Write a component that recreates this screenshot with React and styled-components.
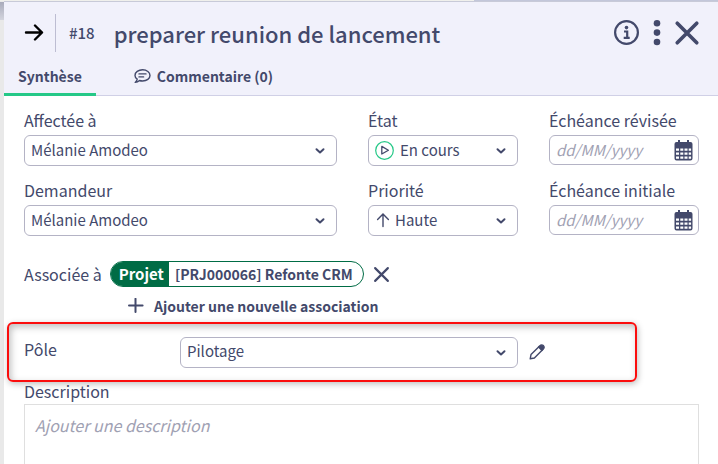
import React from 'react'
import styled, { createGlobalStyle } from 'styled-components'

const INK = '#43496b'
const LINE = '#b4b3c5'
const GREEN = '#25c887'
const FONT = '"Noto Sans CJK SC", "Noto Sans", sans-serif'

const GlobalStyle = createGlobalStyle`
  * { box-sizing:border-box; }
  body {
    margin:0;
    background:#e9e9e9;
    color:${INK};
    font:400 16px/24px ${FONT};
  }
  button, input, select, textarea { font:inherit; color:inherit; }
  button { padding:0; border:0; background:none; cursor:pointer; }
  svg { display:block; flex:none; }
`

const Page = styled.div`
  min-height:100vh;
  display:flex;
  flex-direction:column;
  padding:1px 0 0 4px;
  background:
    linear-gradient(90deg, #f0f0ec 66%, #c3c7da 66%) 0 0 / 100% 1px no-repeat,
    linear-gradient(#a9abbb, #d3d4dd) 0 2px / 4px 18px no-repeat,
    #e9e9e9;
`

const Panel = styled.main`
  flex:1;
  display:flex;
  flex-direction:column;
  background:#fff;
`

const Header = styled.header`
  background:#f1f1fb;
  border-top:1px solid #c8cad8;
  border-bottom:1px solid #d0d0e6;
`

const TitleBar = styled.div`
  display:flex;
  align-items:center;
  height:62px;
  padding:0 18px 0 20px;
`

const Reference = styled.span`
  height:38px;
  margin-left:11px;
  padding-left:13px;
  border-left:1px solid #bdbdd2;
  font-size:15px;
  font-weight:500;
  line-height:38px;
`

const Title = styled.h1`
  flex:1;
  margin:0 0 0 19px;
  font-size:22px;
  font-weight:500;
  line-height:32px;
`

const Actions = styled.div`
  display:flex;
  align-items:center;
  gap:12px;
`

const Tabs = styled.nav`
  display:flex;
  gap:24px;
  margin-bottom:-1px;
`

const Tab = styled.button`
  display:flex;
  align-items:center;
  gap:6px;
  height:32px;
  padding:0 14px 5px;
  border-bottom:3px solid ${p => p.$active ? GREEN : 'transparent'};
  font-size:14px;
  font-weight:700;
`

const Fields = styled.div`
  display:grid;
  grid-template-columns:1fr 150px 150px;
  gap:12px 31px;
  padding:12px 19px 0 20px;
`

const Field = styled.div`
  display:flex;
  flex-direction:column;
  gap:3px;
`

const Label = styled.label`
  font-size:16px;
  line-height:24px;
`

const Control = styled.div`
  display:grid;
  grid-template-columns:auto 1fr auto;
  align-items:center;
  flex:${p => p.$grow ? 1 : 'none'};
`

const Select = styled.select`
  grid-area:1 / 1 / 2 / 4;
  appearance:none;
  width:100%;
  height:31px;
  padding:0 32px 2px ${p => p.$indent || 6}px;
  border:1px solid ${LINE};
  border-radius:6px;
  background:#fff;
  font-size:15px;
  line-height:24px;
`

const Leading = styled.span`
  grid-area:1 / 1;
  padding-left:7px;
  pointer-events:none;
`

const Trailing = styled.span`
  grid-area:1 / 3;
  padding-right:12px;
  pointer-events:none;
`

const DateInput = styled.input`
  grid-area:1 / 1 / 2 / 4;
  width:100%;
  height:30px;
  padding:0 36px 1px 6px;
  border:1px solid ${LINE};
  border-radius:6px;
  background:#fff;
  font-size:15px;
  &::placeholder { color:#9fa1b3; font-style:italic; opacity:1; }
`

const DateButton = styled.button`
  grid-area:1 / 3;
  padding-right:6px;
`

const Associations = styled.div`
  display:flex;
  align-items:center;
  margin-top:25px;
  padding-left:20px;
`

const Pill = styled.span`
  display:flex;
  height:26px;
  margin:0 9px 0 8px;
  border:1px solid #006c45;
  border-radius:13px;
  overflow:hidden;
  font-size:14px;
  font-weight:700;
  line-height:24px;
`

const PillKind = styled.span`
  padding:0 5px 0 8px;
  background:#006c45;
  color:#fff;
  font-size:15px;
`

const PillText = styled.span`
  padding:0 10px 0 6px;
`

const AddButton = styled.button`
  align-self:flex-start;
  display:flex;
  align-items:center;
  gap:10px;
  height:24px;
  margin:7px 0 0 124px;
  font-size:14px;
  font-weight:700;
`

const Highlight = styled.section`
  display:flex;
  align-items:center;
  height:60px;
  margin:4px 81px -3px 3px;
  padding:0 90px 0 15px;
  border:2px solid #fb0d0d;
  border-radius:6px;
  box-shadow:1px 2px 6px rgba(0,0,0,0.25), inset 2px 3px 7px rgba(0,0,0,0.25);
`

const RowLabel = styled(Label)`
  flex:0 0 156px;
  padding-bottom:6px;
`

const EditButton = styled.button`
  margin-left:11px;
`

const Description = styled.div`
  flex:1;
  display:flex;
  flex-direction:column;
  gap:1px;
  padding:0 19px 0 20px;
`

const TextArea = styled.textarea`
  flex:1;
  min-height:60px;
  padding:8px 10px;
  border:1px solid #dfdfdf;
  border-bottom:0;
  background:#fff;
  resize:none;
  &::placeholder { color:#9fa1b3; font-style:italic; opacity:1; }
`

const ArrowRight = () =>
  <svg width="20" height="18" viewBox="0 0 20 18" fill="none" stroke="#000" strokeWidth="2.4" strokeLinecap="round" strokeLinejoin="round">
    <path d="M2,8.5 H18 M11,1.5 L18,8.5 L11,15.5"/>
  </svg>

const InfoIcon = () =>
  <svg width="26" height="26" viewBox="0 0 26 26" fill="none" stroke={INK}>
    <circle cx="12.5" cy="12.5" r="11.4" strokeWidth="2.2"/>
    <circle cx="12.5" cy="7.6" r="1.8" fill={INK} stroke="none"/>
    <path d="M10,11.5 H13.2 V17.5 M9.7,17.9 H15.7" strokeWidth="2.2"/>
  </svg>

const DotsIcon = () =>
  <svg width="10" height="26" viewBox="0 0 10 26" fill={INK}>
    <circle cx="5" cy="3.3" r="3.3"/>
    <circle cx="5" cy="12.6" r="3.3"/>
    <circle cx="5" cy="22" r="3.3"/>
  </svg>

const CrossIcon = ({ size, stroke }) =>
  <svg width={size} height={size} viewBox="0 0 24 24" fill="none" stroke={INK} strokeWidth={stroke} strokeLinecap="round">
    <path d="M3,3 L21,21 M21,3 L3,21"/>
  </svg>

const CommentIcon = () =>
  <svg width="17" height="16" viewBox="0 0 17 16" fill="none" stroke={INK} strokeWidth="1.4" strokeLinecap="round" strokeLinejoin="round">
    <path d="M3.2,11.1 C1.8,10.1 1,8.8 1,7.4 C1,4.3 4.4,1.8 8.6,1.8 C12.8,1.8 16,4.3 16,7.4 C16,10.5 12.8,13 8.6,13 C7.5,13 6.5,12.9 5.5,12.5 C4.4,13.5 3,14.3 1.2,14.4 C2.3,13.4 3,12.3 3.2,11.1 Z"/>
    <path d="M5,5.9 H12 M5,8.9 H9.6"/>
  </svg>

const Chevron = () =>
  <svg width="10" height="7" viewBox="0 0 10 7" fill="none" stroke={INK} strokeWidth="2" strokeLinecap="round" strokeLinejoin="round">
    <path d="M1.5,2.2 L5,5.4 L8.5,2.2"/>
  </svg>

const PlayIcon = () =>
  <svg width="19" height="19" viewBox="0 0 19 19" fill="none">
    <circle cx="9.5" cy="9.5" r="8.8" stroke={GREEN} strokeWidth="1.2"/>
    <path d="M6.8,5.4 L13.4,9.2 L6.8,13 Z" stroke={INK} strokeWidth="1.3" strokeLinejoin="round"/>
  </svg>

const ArrowUp = () =>
  <svg width="16" height="16" viewBox="0 0 16 16" fill="none" stroke={INK} strokeWidth="1.4" strokeLinecap="round" strokeLinejoin="round">
    <path d="M8,13.5 V1 M2.6,6.5 L8,1 L13.4,6.5"/>
  </svg>

const CalendarIcon = () =>
  <svg width="19" height="21" viewBox="0 0 19 21" fill={INK}>
    <path d="M4,0 h2 v2 h7 v-2 h2 v2 h1.5 a2,2 0 0 1 2,2 v14.5 a2,2 0 0 1 -2,2 h-14 a2,2 0 0 1 -2,-2 v-14.5 a2,2 0 0 1 2,-2 h1.5 z"/>
    <path fill="#fff" d="M2,8.4 h3 v2.4 h-3z M6.3,8.4 h3 v2.4 h-3z M10.5,8.4 h3 v2.4 h-3z M14.7,8.4 h2.4 v2.4 h-2.4z M2,12.4 h3 v2.4 h-3z M6.3,12.4 h3 v2.4 h-3z M10.5,12.4 h3 v2.4 h-3z M14.7,12.4 h2.4 v2.4 h-2.4z M2,16.4 h3 v2.4 h-3z M6.3,16.4 h3 v2.4 h-3z M10.5,16.4 h3 v2.4 h-3z M14.7,16.4 h2.4 v2.4 h-2.4z"/>
  </svg>

const PlusIcon = () =>
  <svg width="16" height="16" viewBox="0 0 16 16" fill="none" stroke={INK} strokeWidth="2" strokeLinecap="round">
    <path d="M7.5,0.8 V14 M1,7.4 H14.6"/>
  </svg>

const PencilIcon = () =>
  <svg width="16" height="16" viewBox="0 0 16 16" fill="none" stroke={INK} strokeWidth="1.4" strokeLinejoin="round">
    <path d="M1.2,14.8 L2,10.6 L10.4,2.2 L13.8,5.6 L5.4,14 Z"/>
    <path d="M9.6,3 L11.6,1.2 Q13,0.4 14.4,1.6 Q15.6,3 14.8,4.4 L13,6.4 Z" fill={INK}/>
  </svg>

const SelectBox = ({ id, value, icon, indent, grow }) =>
  <Control $grow={grow}>
    <Select id={id} $indent={indent} defaultValue={value}>
      <option>{value}</option>
    </Select>
    { icon && <Leading>{icon}</Leading> }
    <Trailing><Chevron/></Trailing>
  </Control>

const DateBox = ({ id }) =>
  <Control>
    <DateInput id={id} type="text" placeholder="dd/MM/yyyy"/>
    <DateButton type="button" aria-label="Ouvrir le calendrier"><CalendarIcon/></DateButton>
  </Control>

const FIELDS = [
  { id: 'assignee', label: 'Affectée à', value: 'Mélanie Amodeo' },
  { id: 'state', label: 'État', value: 'En cours', icon: <PlayIcon/>, indent: 31 },
  { id: 'due-revised', label: 'Échéance révisée', date: true },
  { id: 'requester', label: 'Demandeur', value: 'Mélanie Amodeo' },
  { id: 'priority', label: 'Priorité', value: 'Haute', icon: <ArrowUp/>, indent: 26 },
  { id: 'due-initial', label: 'Échéance initiale', date: true },
]

export default function App () {
  return <Page>
    <GlobalStyle/>
    <Panel>
      <Header>
        <TitleBar>
          <button type="button" aria-label="Replier"><ArrowRight/></button>
          <Reference>#18</Reference>
          <Title>preparer reunion de lancement</Title>
          <Actions>
            <button type="button" aria-label="Informations"><InfoIcon/></button>
            <button type="button" aria-label="Plus d'actions"><DotsIcon/></button>
            <button type="button" aria-label="Fermer"><CrossIcon size={26} stroke={3.4}/></button>
          </Actions>
        </TitleBar>
        <Tabs>
          <Tab type="button" $active>Synthèse</Tab>
          <Tab type="button"><CommentIcon/>Commentaire (0)</Tab>
        </Tabs>
      </Header>
      <Fields>
        { FIELDS.map(f =>
          <Field key={f.id}>
            <Label htmlFor={f.id}>{f.label}</Label>
            { f.date ? <DateBox id={f.id}/> : <SelectBox {...f}/> }
          </Field>
        )}
      </Fields>
      <Associations>
        <span>Associée à</span>
        <Pill>
          <PillKind>Projet</PillKind>
          <PillText>[PRJ000066] Refonte CRM</PillText>
        </Pill>
        <button type="button" aria-label="Retirer l'association"><CrossIcon size={17} stroke={3}/></button>
      </Associations>
      <AddButton type="button"><PlusIcon/>Ajouter une nouvelle association</AddButton>
      <Highlight>
        <RowLabel htmlFor="pole">Pôle</RowLabel>
        <SelectBox id="pole" value="Pilotage" grow/>
        <EditButton type="button" aria-label="Modifier"><PencilIcon/></EditButton>
      </Highlight>
      <Description>
        <Label htmlFor="description">Description</Label>
        <TextArea id="description" placeholder="Ajouter une description"/>
      </Description>
    </Panel>
  </Page>
}
